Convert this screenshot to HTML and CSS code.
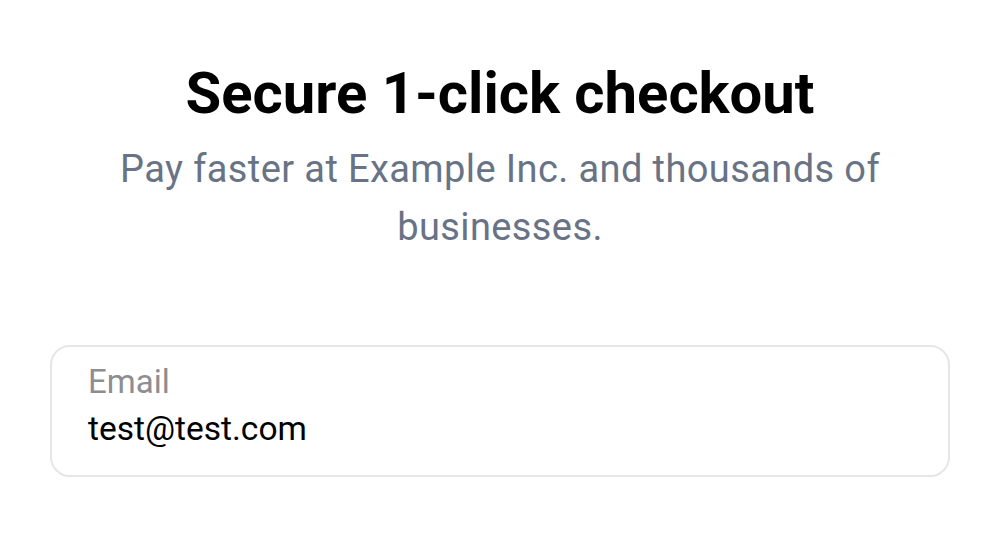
FILE: index.html
```html
<!DOCTYPE html>
<html>
<head>
<meta charset="utf-8">
<link rel="stylesheet" href="styles.css">
</head>
<body>
<main class="page">
  <h1 class="title">Secure 1-click checkout</h1>
  <p class="subtitle">Pay faster at Example Inc. and thousands of businesses.</p>
  <div class="field">
    <div class="label">Email</div>
    <div class="value">test@test.com</div>
  </div>
</main>
</body>
</html>
```

FILE: styles.css
```css
* { box-sizing: border-box; }
html, body { margin: 0; padding: 0; background: #fff; }
body { font-family: Roboto, "Noto Sans", sans-serif; }
.page {
  width: 1000px;
  padding: 58px 50px 0 50px;
  display: flex;
  flex-direction: column;
  align-items: center;
}
.title {
  margin: 0;
  font-size: 58px;
  font-weight: 700;
  line-height: 70px;
  color: #000;
  text-align: center;
}
.subtitle {
  margin: 0;
  margin-top: 12px;
  width: 800px;
  font-size: 38px;
  letter-spacing: 0.4px;
  line-height: 58px;
  color: #687385;
  text-align: center;
}
.field {
  margin-top: 89px;
  align-self: stretch;
  height: 132px;
  border: 2px solid #e6e6e6;
  border-radius: 20px;
  padding: 17px 36px;
  display: flex;
  flex-direction: column;
}
.label {
  font-size: 33px;
  line-height: 36px;
  color: #8d8d92;
}
.value {
  font-size: 33.5px;
  line-height: 58px;
  color: #000;
}
```
